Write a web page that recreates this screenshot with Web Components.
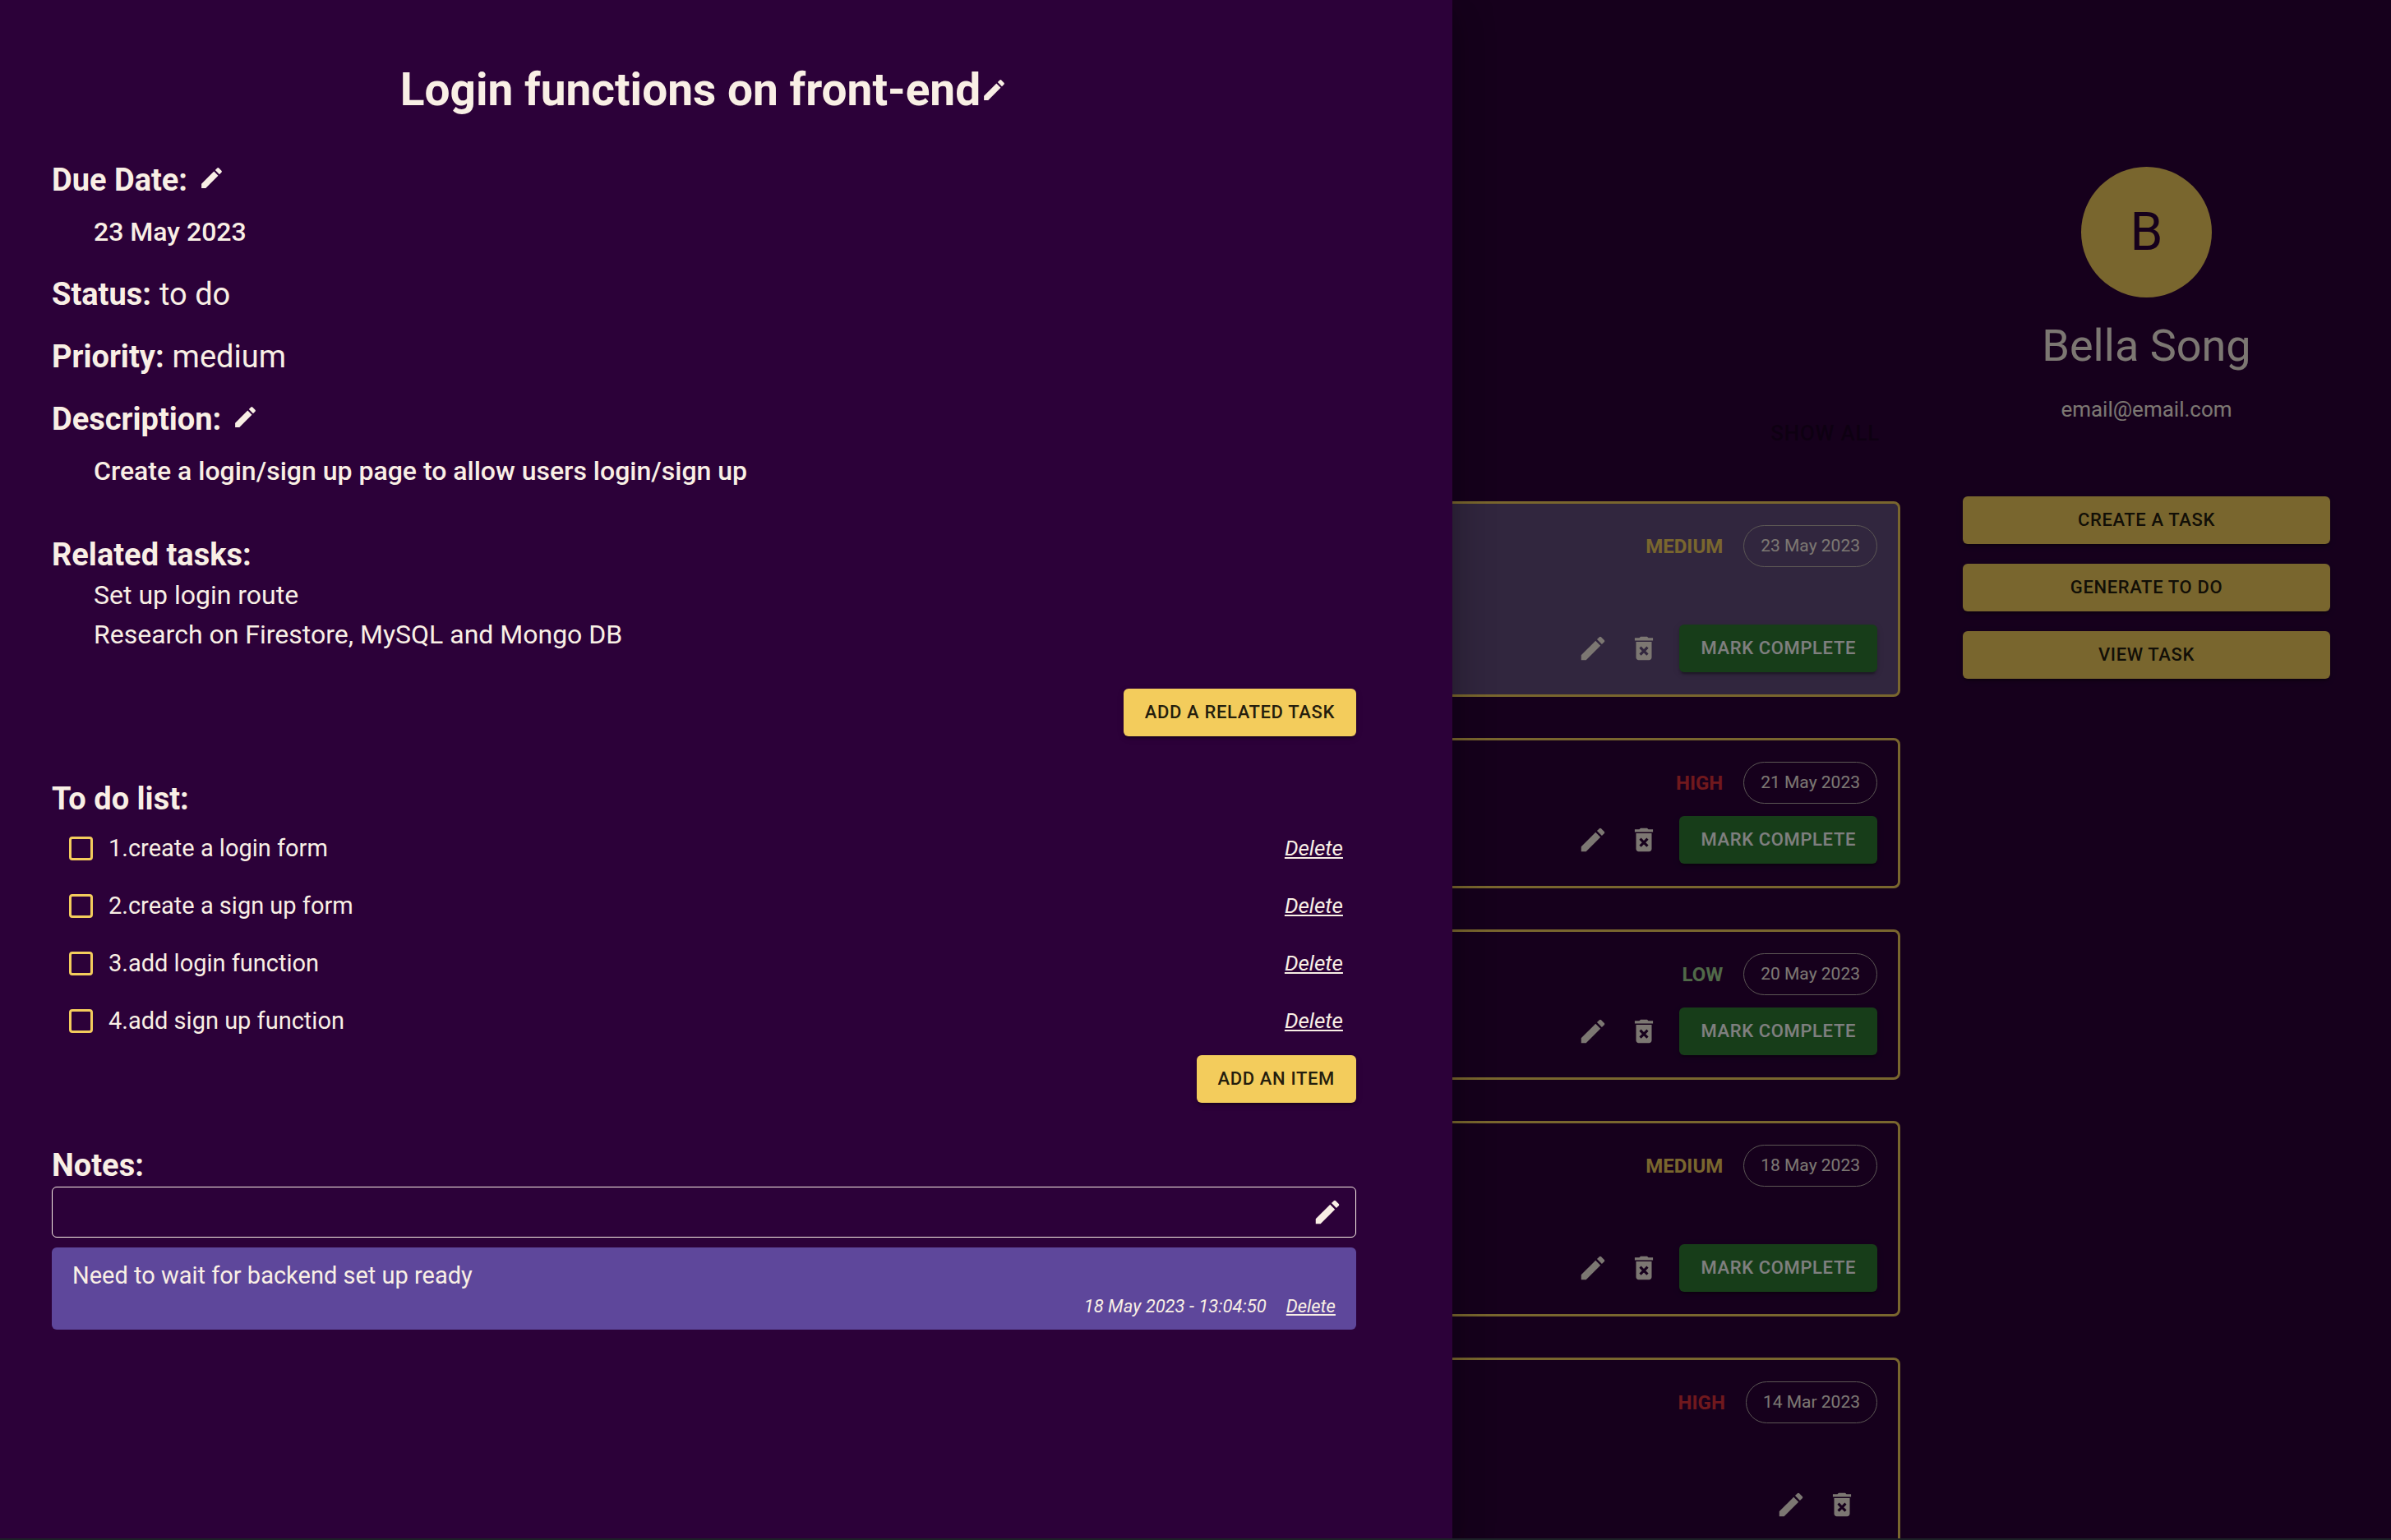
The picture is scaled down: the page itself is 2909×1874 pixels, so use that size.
<!DOCTYPE html>
<html lang="en">
<head>
<meta charset="utf-8">
<meta name="viewport" content="width=device-width, initial-scale=1">
<title>Task board</title>
<style>
  :root {
    --bg: #2c0139;
    --gold: #f3cc5c;
    --cream: #f9efe5;
    --violet: #5e479b;
    --green: #2f7a33;
    --ink: rgba(0, 0, 0, .87);
  }
  body {
    margin: 0;
    background: #1d2127;
    color: var(--cream);
    font-family: Roboto, "Liberation Sans", sans-serif;
  }
</style>
</head>
<body>
<task-app>
  <task-board slot="board">
    <task-card selected priority="medium" date="23 May 2023" completable tall></task-card>
    <task-card priority="high" date="21 May 2023" completable></task-card>
    <task-card priority="low" date="20 May 2023" completable></task-card>
    <task-card priority="medium" date="18 May 2023" completable tall></task-card>
    <task-card priority="high" date="14 Mar 2023" tall></task-card>
  </task-board>
  <user-panel slot="side" name="Bella Song" email="email@email.com">
    <app-button>Create a task</app-button>
    <app-button>Generate to do</app-button>
    <app-button>View task</app-button>
  </user-panel>
  <task-drawer slot="drawer">
    <drawer-title slot="title">Login functions on front-end</drawer-title>
    <detail-field label="Due Date:" editable><span slot="body">23 May 2023</span></detail-field>
    <detail-field label="Status:">to do</detail-field>
    <detail-field label="Priority:">medium</detail-field>
    <detail-field label="Description:" editable><span slot="body">Create a login/sign up page to allow users login/sign up</span></detail-field>
    <related-tasks slot="sections">
      <li>Set up login route</li>
      <li>Research on Firestore, MySQL and Mongo DB</li>
      <app-button slot="action">Add a related task</app-button>
    </related-tasks>
    <todo-list slot="sections">
      <todo-item>1.create a login form</todo-item>
      <todo-item>2.create a sign up form</todo-item>
      <todo-item>3.add login function</todo-item>
      <todo-item>4.add sign up function</todo-item>
      <app-button slot="action">Add an item</app-button>
    </todo-list>
    <task-notes slot="sections">
      <note-card time="18 May 2023 - 13:04:50">Need to wait for backend set up ready</note-card>
    </task-notes>
  </task-drawer>
</task-app>

<script>
const define = (name, render) => customElements.define(name, class extends HTMLElement {
  constructor() {
    super();
    this.attachShadow({ mode: 'open' });
  }
  connectedCallback() {
    this.shadowRoot.innerHTML = '<style>*{box-sizing:border-box}' + render(this);
  }
});

define('app-icon', el => {
  const paths = {
    edit: 'M3 17.25V21h3.75L17.81 9.94l-3.75-3.75L3 17.25zM20.71 7.04c.39-.39.39-1.02 0-1.41l-2.34-2.34a.9959.9959 0 0 0-1.41 0l-1.83 1.83 3.75 3.75 1.83-1.83z',
    trash: 'M6 19c0 1.100.9 2 2 2h8c1.100 0 2-.9 2-2V7H6v12zm2.460-7.120l1.410-1.410L12 12.590l2.120-2.120 1.410 1.410L13.410 14l2.120 2.120-1.410 1.410L12 15.410l-2.120 2.120-1.410-1.410L10.590 14l-2.130-2.120zM15.500 4l-1-1h-5l-1 1H5v2h14V4z'
  };
  return `
    :host { display: block; flex: none; width: 38px; height: 38px; }
    :host([small]) { width: 33px; height: 33px; }
    svg { display: block; width: 100%; height: 100%; fill: currentColor; }
  </style>
  <svg viewBox="0 0 24 24" aria-hidden="true"><path d="${paths[el.getAttribute('name')]}"/></svg>`;
});

define('icon-button', el => `
    :host { display: block; flex: none; }
    button { display: block; padding: 12px; border: 0; background: none; color: inherit; cursor: pointer; }
    :host([flush]) button { padding: 0; }
  </style>
  <button type="button" aria-label="${el.getAttribute('label')}">
    <app-icon name="${el.getAttribute('icon')}" ${el.hasAttribute('small') ? 'small' : ''}></app-icon>
  </button>`);

define('app-button', () => `
    :host { display: block; flex: none; }
    button {
      display: block; width: 100%; height: 58px; padding: 0 26px; border: 0; border-radius: 6px;
      background: var(--gold); color: var(--ink);
      font: 500 22px/38px Roboto, "Liberation Sans", sans-serif;
      letter-spacing: .02857em; text-transform: uppercase; cursor: pointer;
      box-shadow: 0 5px 2px -3px rgba(0,0,0,.2), 0 3px 3px rgba(0,0,0,.14), 0 2px 8px rgba(0,0,0,.12);
    }
    :host([success]) button { background: var(--green); color: #fff; }
  </style>
  <button type="button"><slot></slot></button>`);

define('delete-link', () => `
    :host { display: block; flex: none; }
    a { color: inherit; font-style: italic; text-decoration: underline; }
  </style>
  <a href="#">Delete</a>`);

define('task-app', () => `
    :host {
      display: grid; position: relative; height: calc(100vh - 2px); overflow: hidden;
      grid-template-columns: minmax(0, 1fr) 447px; gap: 76px; padding: 0 74px; box-sizing: border-box;
      background: var(--bg);
    }
    .backdrop { position: absolute; inset: 0; background: rgba(0, 0, 0, .5); }
  </style>
  <slot name="board"></slot>
  <slot name="side"></slot>
  <div class="backdrop"></div>
  <slot name="drawer"></slot>`);

define('task-board', () => `
    :host { display: flex; flex-direction: column; gap: 50px; padding-top: 504px; }
    header { display: flex; justify-content: flex-end; padding-right: 25px; height: 56px; }
    button {
      height: 46px; padding: 0; border: 0; background: none; color: #1c0024;
      font: 500 26px/46px Roboto, "Liberation Sans", sans-serif; letter-spacing: .02857em;
      text-transform: uppercase;
    }
  </style>
  <header><button type="button">Show all</button></header>
  <slot></slot>`);

define('task-card', el => `
    :host {
      display: flex; flex: none; flex-direction: column; justify-content: space-between;
      box-sizing: border-box; min-height: 183px; padding: 26px 25px 25px;
      border: 3px solid var(--gold); border-radius: 8px;
    }
    :host([tall]) { min-height: 238px; }
    :host([selected]) { background: #624c7c; }
    .row { display: flex; align-items: center; justify-content: flex-end; }
    .priority { margin-right: 25px; font-size: 24px; line-height: 36px; font-weight: 700; text-transform: uppercase; }
    .high { color: #e0303a; }
    .medium { color: var(--gold); }
    .low { color: #a0d291; }
    .date { height: 51px; padding: 0 20px; border: 1px solid #b8afa9; border-radius: 26px; font-size: 21px; line-height: 48px; }
    app-button, .end { margin-left: 12px; }
    .end { height: 58px; }
  </style>
  <div class="row">
    <span class="priority ${el.getAttribute('priority')}">${el.getAttribute('priority')}</span>
    <time class="date">${el.getAttribute('date')}</time>
  </div>
  <div class="row">
    <icon-button icon="edit" label="Edit"></icon-button>
    <icon-button icon="trash" label="Delete"></icon-button>
    ${el.hasAttribute('completable') ? '<app-button success>Mark complete</app-button>' : '<span class="end"></span>'}
  </div>`);

define('user-panel', el => `
    :host { display: flex; flex-direction: column; align-items: center; padding-top: 203px; }
    .avatar {
      display: grid; place-items: center; width: 159px; height: 159px; border-radius: 50%;
      background: var(--gold); color: var(--bg); font-size: 64px; line-height: 64px;
    }
    h1 { margin: 25px 0; font-size: 54px; line-height: 67px; font-weight: 400; }
    p { margin: 0; font-size: 26px; line-height: 39px; }
    nav { display: grid; gap: 24px; width: 100%; margin-top: 86px; }
  </style>
  <div class="avatar">${el.getAttribute('name')[0]}</div>
  <h1>${el.getAttribute('name')}</h1>
  <p>${el.getAttribute('email')}</p>
  <nav><slot></slot></nav>`);

define('task-drawer', () => `
    :host {
      display: flex; flex-direction: column; gap: 51px; position: absolute; inset: 0 auto 0 0;
      box-sizing: border-box; width: 60.74%; padding: 76px 117px 0 63px; background: var(--bg);
      box-shadow: 0 13px 16px -8px rgba(0,0,0,.2), 0 25px 38px 3px rgba(0,0,0,.14), 0 10px 48px 8px rgba(0,0,0,.12);
    }
    .fields { display: flex; flex-direction: column; gap: 25px; }
  </style>
  <slot name="title"></slot>
  <div class="fields"><slot></slot></div>
  <slot name="sections"></slot>`);

define('drawer-title', () => `
    :host { display: flex; align-items: center; justify-content: center; }
    h2 { margin: 0; font-size: 55px; line-height: 67px; font-weight: 700; }
  </style>
  <h2><slot></slot></h2>
  <icon-button icon="edit" label="Edit title" small flush></icon-button>`);

define('detail-field', el => `
    :host { display: block; font-size: 38px; line-height: 51px; }
    .head { display: flex; align-items: center; gap: 10px; }
    icon-button { padding: 0 0 7px 3px; }
    h3 { margin: 0; font-size: 38px; line-height: 51px; font-weight: 700; }
    .body { margin: 12px 0 0 51px; font-size: 32px; line-height: 51px; font-weight: 500; }
  </style>
  <div class="head"><h3>${el.getAttribute('label')}</h3>${el.hasAttribute('editable')
    ? '<icon-button icon="edit" label="Edit" small flush></icon-button>' : '<span><slot></slot></span>'}</div>
  ${el.hasAttribute('editable') ? '<div class="body"><slot name="body"></slot></div>' : ''}`);

const sectionStyle = `
    :host { display: block; }
    h3 { margin: 0; font-size: 38px; line-height: 50px; font-weight: 700; }
    .action { display: flex; justify-content: flex-end; }`;

define('related-tasks', () => `${sectionStyle}
    ul { margin: 0 0 42px; padding: 0 0 0 51px; list-style: none; font-size: 32px; line-height: 48px; }
    ::slotted(li) { display: block; }
  </style>
  <h3>Related tasks:</h3>
  <ul><slot></slot></ul>
  <div class="action"><slot name="action"></slot></div>`);

define('todo-list', () => `${sectionStyle}
    .items { margin-bottom: 7px; padding: 0 16px 0 21px; }
  </style>
  <h3>To do list:</h3>
  <div class="items"><slot></slot></div>
  <div class="action"><slot name="action"></slot></div>`);

define('todo-item', () => `
    :host { display: flex; align-items: center; justify-content: space-between; height: 70px; }
    label { display: flex; align-items: center; gap: 19px; font-size: 29px; line-height: 43px; }
    input {
      appearance: none; flex: none; width: 29px; height: 29px; margin: 0;
      border: 3px solid var(--gold); border-radius: 4px;
    }
    delete-link { font-size: 26px; line-height: 39px; }
  </style>
  <label><input type="checkbox"><span><slot></slot></span></label>
  <delete-link></delete-link>`);

define('task-notes', () => `${sectionStyle}
    label { display: block; font-size: 38px; line-height: 51px; font-weight: 700; }
    .field { display: flex; align-items: center; height: 62px; margin-bottom: 12px; padding-right: 15px; border: 1px solid var(--cream); border-radius: 6px; }
    input { flex: 1; min-width: 0; height: 60px; padding: 0 25px; border: 0; outline: 0; background: none; color: inherit; font: 29px Roboto, sans-serif; }
  </style>
  <label for="note">Notes:</label>
  <div class="field"><input id="note" type="text"><icon-button icon="edit" label="Add note" flush></icon-button></div>
  <slot></slot>`);

define('note-card', el => `
    :host { display: block; box-sizing: border-box; height: 100px; padding: 13px 25px; border-radius: 6px; background: var(--violet); }
    p { margin: 0; font-size: 29px; line-height: 43px; }
    footer { display: flex; justify-content: flex-end; gap: 24px; font-size: 22px; line-height: 32px; }
    time { font-style: italic; }
  </style>
  <p><slot></slot></p>
  <footer><time>${el.getAttribute('time')}</time><delete-link></delete-link></footer>`);
</script>
</body>
</html>
